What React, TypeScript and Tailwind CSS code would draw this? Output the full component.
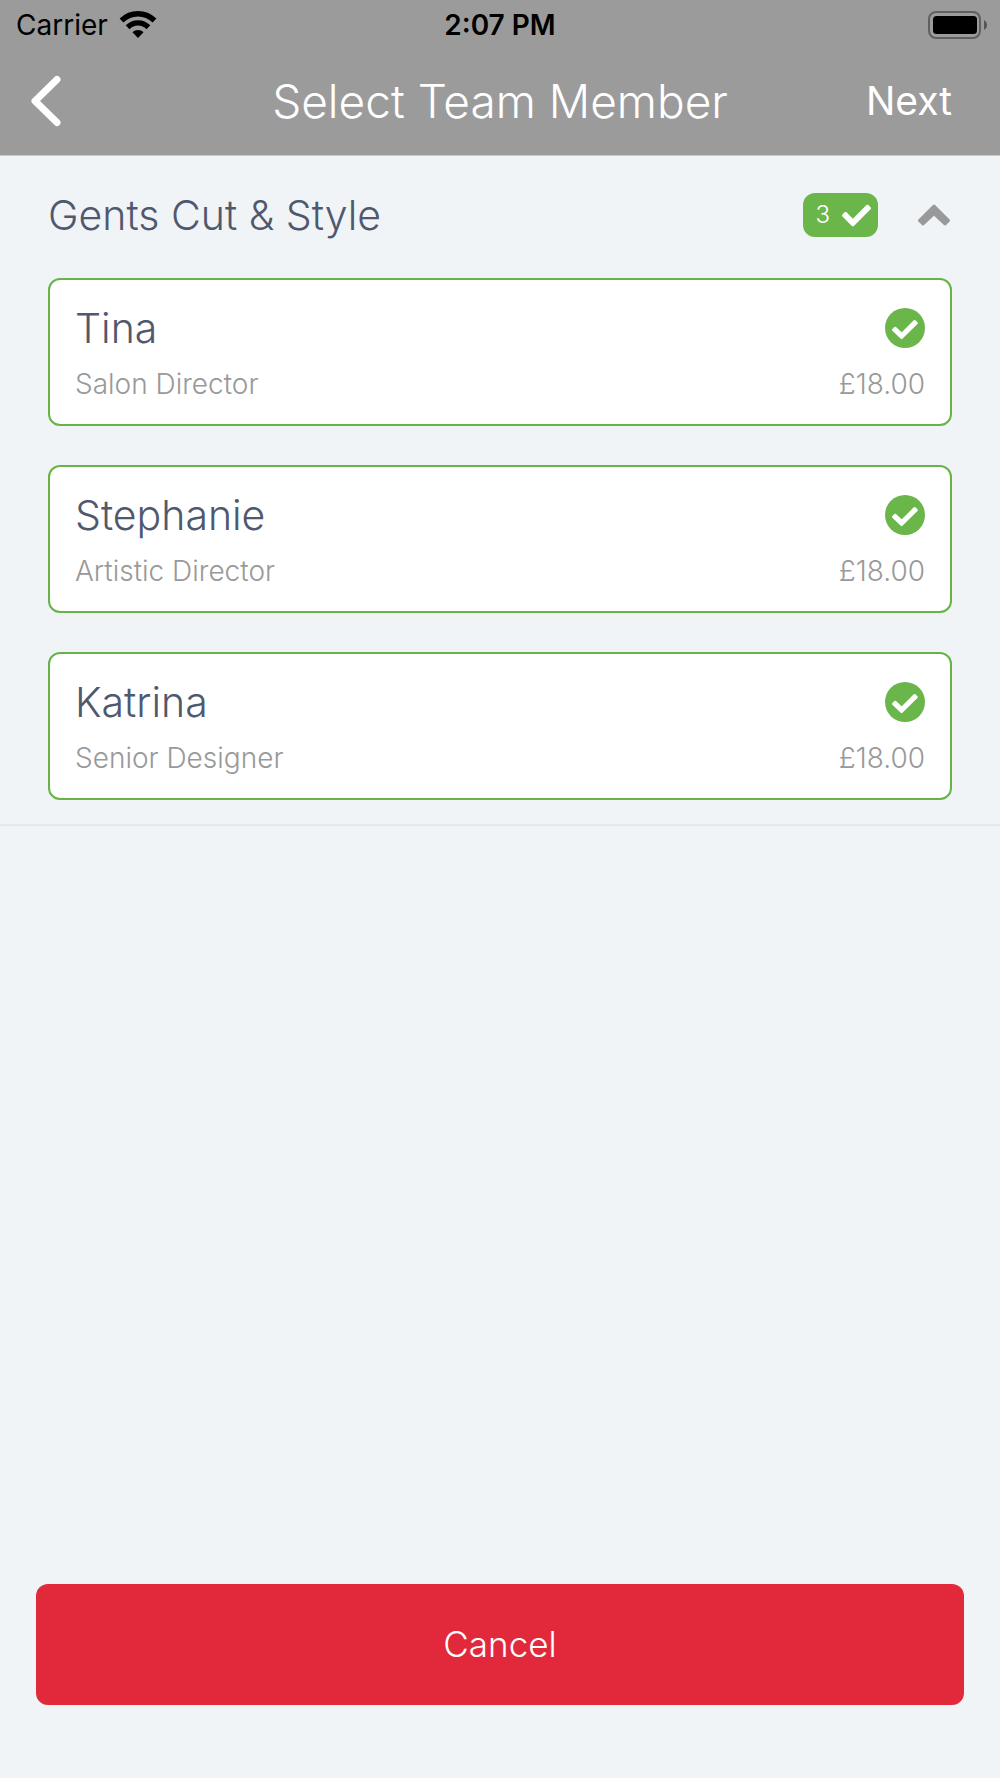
import { useState } from "react";
import { FaCheck } from "react-icons/fa";

interface Member {
  name: string,
  role: string,
  price: string
}

const members: Member[] = [
  { name: "Tina", role: "Salon Director", price: "£18.00" },
  { name: "Stephanie", role: "Artistic Director", price: "£18.00" },
  { name: "Katrina", role: "Senior Designer", price: "£18.00" },
];

function WifiIcon() {
  return (
    <svg width="38" height="28" viewBox="0 0 38 28" fill="none" aria-hidden="true">
      <path d="M2.5 9.5 C12 0.5 26 0.5 35.5 9.5" stroke="black" strokeWidth="5.4" />
      <path d="M8.6 16.2 C14.5 10.4 23.5 10.4 29.4 16.2" stroke="black" strokeWidth="5.4" />
      <path d="M13.5 21.2 C16.5 18.2 21.5 18.2 24.5 21.2 L19 27 Z" fill="black" />
    </svg>
  )
}

function BatteryIcon() {
  return (
    <svg width="60" height="28" viewBox="0 0 60 28" aria-hidden="true">
      <rect x="1" y="1" width="51" height="26" rx="7" fill="none" stroke="#606060" strokeWidth="2" />
      <rect x="5" y="5" width="44" height="18" rx="3.5" fill="black" />
      <path d="M56 9 C60 11 60 17 56 19 Z" fill="#555" />
    </svg>
  )
}

function ChevronUpIcon({ className }: { className?: string }) {
  return (
    <svg width="32" height="22" viewBox="0 0 32 22" fill="currentColor" stroke="currentColor" strokeWidth="3" strokeLinejoin="round" className={className} aria-hidden="true">
      <path d="M16 2 L30.5 16.5 L27 20 L16 9.6 L5 20 L1.5 16.5 Z" />
    </svg>
  )
}

function CheckCircleIcon({ className }: { className?: string }) {
  return (
    <svg width="40" height="40" viewBox="0 0 40 40" className={className} aria-hidden="true">
      <circle cx="20" cy="20" r="20" fill="currentColor" />
      <path d="M10.2 20 L16.6 26 L29.6 13.2 L31.6 15.2 L16.6 30 L8.2 21.8 Z" fill="white" stroke="white" strokeWidth="2.4" strokeLinejoin="round" />
    </svg>
  )
}

function StatusBar() {
  return (
    <div className="grid h-[50px] grid-cols-3 items-center px-3 text-[28px] leading-8 text-black">
      <div className="flex items-center gap-[11px] pl-1">
        <span>Carrier</span>
        <WifiIcon />
      </div>
      <span className="text-center font-semibold">2:07 PM</span>
      <div className="flex justify-end">
        <BatteryIcon />
      </div>
    </div>
  )
}

function NavBar() {
  return (
    <div className="grid h-[105px] grid-cols-[1fr_auto_1fr] items-center px-[30px] pb-[3px] text-white">
      <button type="button" aria-label="Back" className="justify-self-start">
        <svg width="32" height="52" viewBox="0 0 32 52" fill="none" aria-hidden="true">
          <path d="M27 4.5 L5 26 L27 47.5" stroke="white" strokeWidth="7" strokeLinecap="round" strokeLinejoin="round" />
        </svg>
      </button>
      <h1 className="text-[46px] font-light leading-[48px]">Select Team Member</h1>
      <button type="button" className="justify-self-end pr-[18px] text-[39px] leading-[48px]">Next</button>
    </div>
  )
}

interface CardProps {
  member: Member,
  selected: boolean,
  onToggle: () => void
}

function MemberCard({ member, selected, onToggle }: CardProps) {
  return (
    <label className={`block rounded-xl border-2 bg-white px-[25px] py-6 ${selected ? "border-[#67b346]" : "border-white"}`}>
      <span className="flex h-12 items-center justify-between">
        <span className="text-[41px] font-light leading-[48px] text-[#50586e]">{member.name}</span>
        <span className="grid">
          <input type="checkbox" checked={selected} onChange={onToggle} className="col-start-1 row-start-1 size-10 appearance-none rounded-full" />
          <CheckCircleIcon className={`pointer-events-none col-start-1 row-start-1 ${selected ? "text-[#6ab64a]" : "text-gray-200"}`} />
        </span>
      </span>
      <span className="mt-4 flex justify-between text-[28px] font-light leading-8 text-[#999999]">
        <span>{member.role}</span>
        <span>{member.price}</span>
      </span>
    </label>
  )
}

export default function App() {
  const [selected, setSelected] = useState<string[]>(members.map((m) => m.name));
  const [open, setOpen] = useState(true);

  const toggle = (name: string) => {
    setSelected(selected.includes(name) ? selected.filter((n) => n !== name) : [...selected, name]);
  };

  return (
    <div className="flex min-h-screen flex-col bg-[#f0f4f7] font-['Inter','Liberation_Sans',sans-serif]">
      <header className="border-b border-[#c8cacd] bg-[#9b9b9b]">
        <StatusBar />
        <NavBar />
      </header>

      <main className="flex-1">
        <section className="border-b-2 border-[#e4e9ed] px-12 pb-6 pt-[35px]">
          <div className="flex h-12 items-center justify-between">
            <h2 className="text-[41px] font-light leading-[48px] text-[#50586e]">Gents Cut &amp; Style</h2>
            <div className="flex items-center gap-10">
              <span className="flex h-11 items-center gap-3 rounded-xl bg-[#6ab64a] pl-3 pr-[7px] text-2xl font-light text-white">
                {selected.length}
                <FaCheck className="size-[29px]" />
              </span>
              <button type="button" aria-label="Toggle team members" aria-expanded={open} onClick={() => setOpen(!open)} className="pr-0.5">
                <ChevronUpIcon className="text-[#999999]" />
              </button>
            </div>
          </div>
          {open && (
            <div className="mt-[39px] flex flex-col gap-[39px]">
              {members.map((m) => (
                <MemberCard key={m.name} member={m} selected={selected.includes(m.name)} onToggle={() => toggle(m.name)} />
              ))}
            </div>
          )}
        </section>
      </main>

      <footer className="px-9 pb-[73px]">
        <button type="button" className="h-[121px] w-full rounded-xl bg-[#e2293b] text-[35px] font-light text-white">Cancel</button>
      </footer>
    </div>
  )
}
